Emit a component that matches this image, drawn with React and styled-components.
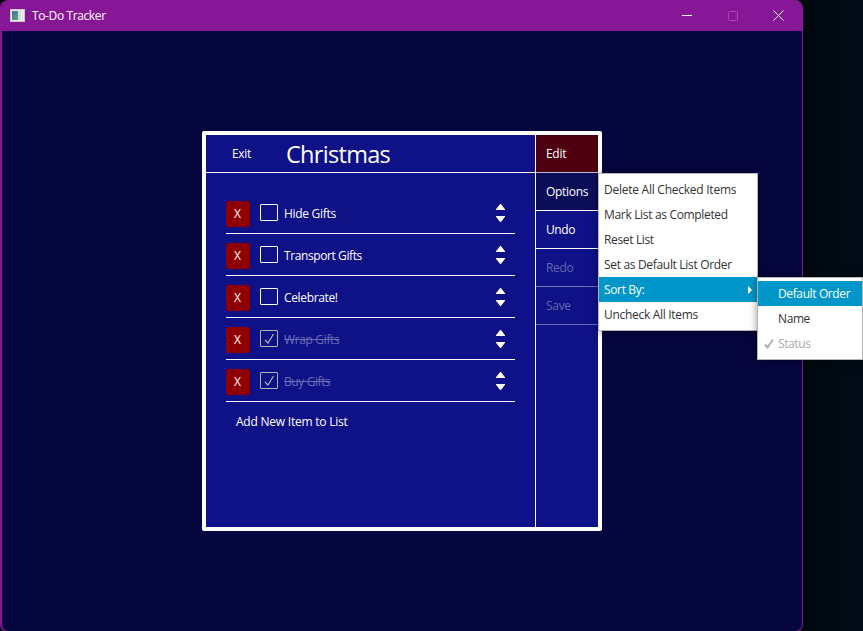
import React from "react";
import styled, { createGlobalStyle, css } from "styled-components";

const GlobalStyle = createGlobalStyle`
  * { box-sizing: border-box; }
  html, body { margin: 0; background: #000b15; overflow: hidden; }
  body {
    font-family: "Open Sans", "Noto Sans", sans-serif;
    font-size: 12px;
    line-height: 16px;
    color: #fff;
    white-space: nowrap;
  }
`;

const Desktop = styled.div`
  position: relative;
  width: 863px;
  height: 631px;
  background: linear-gradient(90deg, #00080d 803px, #000b15 840px);
  overflow: hidden;
`;

const Window = styled.div`
  display: flex;
  flex-direction: column;
  width: 803px;
  height: 632px;
  border: 1px solid #881798;
  border-left-width: 2px;
  border-top: 0;
  border-radius: 8px;
  background: #06063e;
  overflow: hidden;
`;

const TitleBar = styled.div`
  display: flex;
  flex: none;
  align-items: center;
  height: 31px;
  padding-left: 8px;
  background: #881798;
`;

const Title = styled.div`
  flex: 1;
  padding-left: 7px;
  letter-spacing: ${(p) => p.$track}px;
`;

const CaptionButton = styled.div`
  display: flex;
  justify-content: center;
  width: 46px;
  opacity: ${(p) => (p.$disabled ? 0.22 : 1)};
  svg { display: block; }
`;

const Stage = styled.div`
  flex: 1;
  padding: 100px 0 0 200px;
`;

const Panel = styled.div`
  display: flex;
  width: 400px;
  height: 400px;
  border: 4px solid #fff;
  border-radius: 2px;
  background: #0f1187;
`;

const Main = styled.div`
  width: 330px;
  border-right: 1px solid #fff;
`;

const Header = styled.div`
  display: flex;
  align-items: center;
  height: 38px;
  border-bottom: 1px solid #fff;
  padding-left: 26px;
`;

const Exit = styled.div`
  width: 54px;
  letter-spacing: ${(p) => p.$track}px;
`;

const Heading = styled.div`
  font-size: 23.5px;
  line-height: 34px;
  letter-spacing: ${(p) => p.$track}px;
`;

const List = styled.div`
  padding: 19px 20px 0;
`;

const Item = styled.div`
  display: flex;
  align-items: center;
  height: 42px;
  border-bottom: 1px solid #fff;
`;

const Remove = styled.div`
  width: 24px;
  height: 26px;
  border-radius: 3px;
  background: #8f0000;
  line-height: 26px;
  text-align: center;
  margin: 2px 10px 0 0;
  padding-right: 1px;
`;

const Check = styled.div`
  width: 18px;
  height: 17px;
  border: 1px solid ${(p) => (p.$done ? "#b3b3ab" : "#fff")};
  border-radius: 1px;
  margin-right: 6px;
  svg { display: block; }
`;

const ItemName = styled.div`
  flex: 1;
  padding-top: 2px;
  letter-spacing: ${(p) => p.$track}px;
  ${(p) => p.$done && css`
    color: #6b6cb5;
    text-decoration: line-through;
  `}
`;

const Arrows = styled.svg`
  display: block;
  margin-right: 10px;
`;

const AddItem = styled.div`
  padding: 12px 10px 0;
  letter-spacing: ${(p) => p.$track}px;
`;

const Sidebar = styled.div`
  flex: 1;
`;

const SideButton = styled.div`
  height: 38px;
  padding: 11px 0 0 10px;
  background: ${(p) => p.$fill || "transparent"};
  color: ${(p) => (p.$disabled ? "#6566b1" : "#fff")};
  border-bottom: 1px solid ${(p) => p.$line || (p.$disabled ? "#6e6fb7" : "#fff")};
  letter-spacing: ${(p) => p.$track}px;
`;

const Menu = styled.div`
  position: absolute;
  left: ${(p) => p.$x}px;
  top: ${(p) => p.$y}px;
  width: ${(p) => p.$w}px;
  padding: ${(p) => p.$pad};
  border: 1px solid #b5b5b5;
  background: #fff;
  box-shadow: 0 1px 8px rgba(0, 0, 0, 0.4);
`;

const MenuItem = styled.div`
  display: flex;
  align-items: center;
  height: 25px;
  padding: 0 5px;
  background: ${(p) => (p.$active ? "#0096c9" : "transparent")};
  color: ${(p) => (p.$active ? "#fff" : p.$muted ? "#aaa" : "#323232")};
  letter-spacing: ${(p) => p.$track}px;
`;

const MenuText = styled.span`
  flex: 1;
`;

const MarkSlot = styled.span`
  width: 15px;
  svg { display: block; }
`;

const items = [
  { name: "Hide Gifts", track: -0.3 },
  { name: "Transport Gifts", track: -0.4 },
  { name: "Celebrate!", track: -0.35 },
  { name: "Wrap Gifts", track: -0.35, done: true },
  { name: "Buy Gifts", track: -0.4, done: true },
];

const sideButtons = [
  { name: "Edit", track: -0.3, fill: "#4f0010", line: "#b7b7cf" },
  { name: "Options", track: -0.3, fill: "#0c0d59" },
  { name: "Undo", track: -0.4 },
  { name: "Redo", track: -0.3, disabled: true },
  { name: "Save", track: -0.3, disabled: true },
];

const menuItems = [
  { name: "Delete All Checked Items", track: -0.25 },
  { name: "Mark List as Completed", track: -0.33 },
  { name: "Reset List", track: -0.35 },
  { name: "Set as Default List Order", track: -0.32 },
  { name: "Sort By:", track: -0.35, active: true },
  { name: "Uncheck All Items", track: -0.3 },
];

const sortItems = [
  { name: "Default Order", track: -0.38, active: true },
  { name: "Name", track: -0.4 },
  { name: "Status", track: -0.4, muted: true },
];

function AppIcon() {
  return (
    <svg width="15" height="13" viewBox="0 0 15 13">
      <defs>
        <linearGradient id="pane" x1="0" y1="0" x2="1" y2="1">
          <stop offset="0" stopColor="#3f6f9c" />
          <stop offset="1" stopColor="#58a97c" />
        </linearGradient>
      </defs>
      <rect width="15" height="13" fill="#e9ece9" />
      <rect x="0.5" y="0.5" width="14" height="12" fill="none" stroke="#c3cbc5" />
      <rect x="2" y="2" width="6" height="9" fill="url(#pane)" />
      <rect x="8" y="2" width="3" height="9" fill="#d3dbe0" />
      <rect x="11" y="2" width="1" height="9" fill="#f6f6f6" />
      <rect x="12" y="2" width="1" height="9" fill="#dde2df" />
    </svg>
  );
}

export default function App() {
  return (
    <Desktop>
      <GlobalStyle />
      <Window>
        <TitleBar>
          <AppIcon />
          <Title $track={-0.38}>To-Do Tracker</Title>
          <CaptionButton>
            <svg width="10" height="11"><path d="M0 5.5H10" stroke="#fff" /></svg>
          </CaptionButton>
          <CaptionButton $disabled>
            <svg width="10" height="10"><rect x="0.5" y="0.5" width="9" height="9" rx="1" fill="none" stroke="#fff" /></svg>
          </CaptionButton>
          <CaptionButton>
            <svg width="12" height="11"><path d="M0.5 0.5L10.5 10.5M10.5 0.5L0.5 10.5" stroke="#fff" /></svg>
          </CaptionButton>
        </TitleBar>
        <Stage>
          <Panel>
            <Main>
              <Header>
                <Exit $track={-0.3}>Exit</Exit>
                <Heading $track={-0.7}>Christmas</Heading>
              </Header>
              <List>
                {items.map((item) => (
                  <Item key={item.name}>
                    <Remove>X</Remove>
                    <Check $done={item.done}>
                      {item.done && (
                        <svg width="16" height="15">
                          <path d="M4 9L7 12L12.5 3" fill="none" stroke="#b9b9ad" strokeWidth="1.1" />
                        </svg>
                      )}
                    </Check>
                    <ItemName $track={item.track} $done={item.done}>{item.name}</ItemName>
                    <Arrows width="9" height="18">
                      <path d="M4.5 -0.5L9.5 6H-0.5ZM-0.5 12H9.5L4.5 18.5Z" fill="#fff" />
                    </Arrows>
                  </Item>
                ))}
                <AddItem $track={-0.22}>Add New Item to List</AddItem>
              </List>
            </Main>
            <Sidebar>
              {sideButtons.map((b) => (
                <SideButton key={b.name} $fill={b.fill} $line={b.line} $disabled={b.disabled} $track={b.track}>
                  {b.name}
                </SideButton>
              ))}
            </Sidebar>
          </Panel>
        </Stage>
      </Window>
      <Menu $x={598} $y={173} $w={160} $pad="3px 0">
        {menuItems.map((m) => (
          <MenuItem key={m.name} $active={m.active} $track={m.track}>
            <MenuText>{m.name}</MenuText>
            {m.active && (
              <svg width="4" height="8"><path d="M0 0L4 4L0 8Z" fill="#fff" /></svg>
            )}
          </MenuItem>
        ))}
      </Menu>
      <Menu $x={757} $y={277} $w={106} $pad="3px 0">
        {sortItems.map((m) => (
          <MenuItem key={m.name} $active={m.active} $muted={m.muted} $track={m.track}>
            <MarkSlot>
              {m.muted && (
                <svg width="11" height="11"><path d="M2 6.5L4.5 9.5L10 1.5" fill="none" stroke="#b0b0b0" strokeWidth="2" /></svg>
              )}
            </MarkSlot>
            <MenuText>{m.name}</MenuText>
          </MenuItem>
        ))}
      </Menu>
    </Desktop>
  );
}
